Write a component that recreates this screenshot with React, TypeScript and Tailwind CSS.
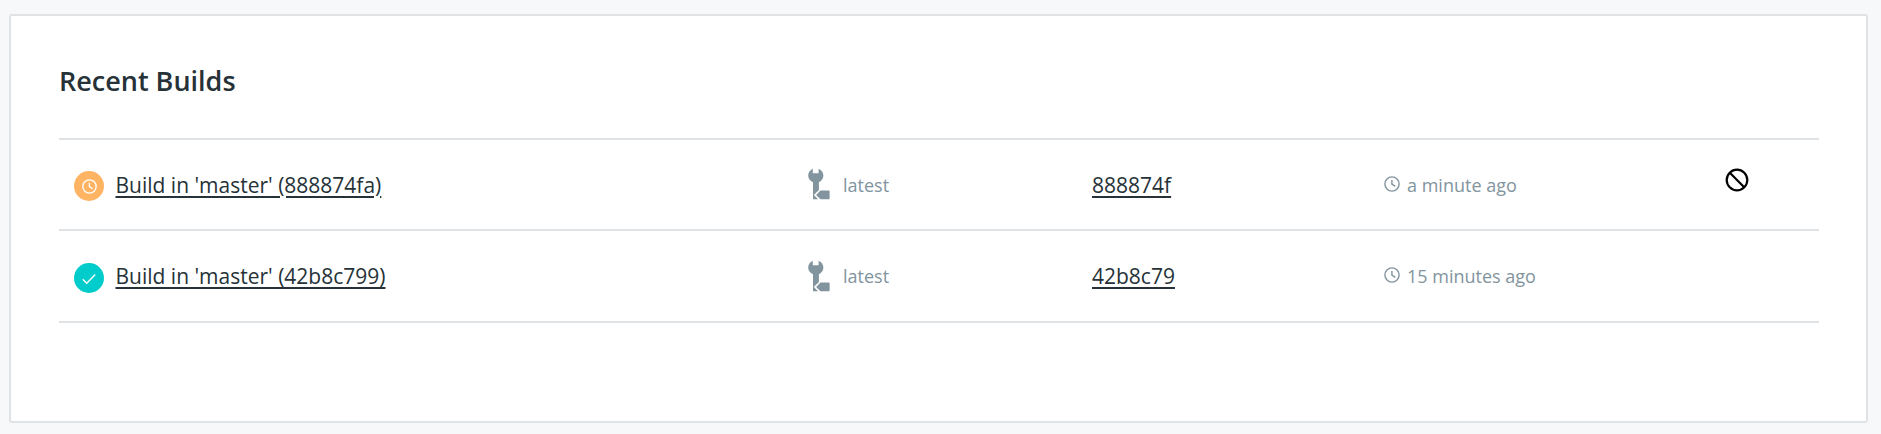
type Build = {
  status: "running" | "success";
  title: string;
  tag: string;
  commit: string;
  age: string;
};

const builds: Build[] = [
  { status: "running", title: "Build in 'master' (888874fa)", tag: "latest", commit: "888874f", age: "a minute ago" },
  { status: "success", title: "Build in 'master' (42b8c799)", tag: "latest", commit: "42b8c79", age: "15 minutes ago" },
];

function Clock({ className }: { className: string }) {
  return (
    <svg viewBox="0 0 16 16" fill="none" stroke="currentColor" strokeWidth="1.4" className={className}>
      <circle cx="8" cy="8" r="7.1" />
      <path d="M7.9 3.9V8.1L11.3 10.4" />
    </svg>
  );
}

function StatusBadge({ status }: { status: Build["status"] }) {
  if (status === "running") {
    return (
      <span className="mt-[2px] flex size-[30px] items-center justify-center rounded-full bg-[#ffb463] pt-[2px] text-white">
        <Clock className="size-[15px]" />
      </span>
    );
  }
  return (
    <span className="mt-[3px] flex size-[30px] items-center justify-center rounded-full bg-[#00cccc] pt-[2px] text-white">
      <svg viewBox="0 0 14 12" fill="none" stroke="currentColor" strokeWidth="1.4" className="h-3 w-3.5">
        <path d="M0.8 6.2L4.8 10.2L13.2 1.5" />
      </svg>
    </span>
  );
}

function BuildTag() {
  return (
    <svg viewBox="0 0 22 32" fill="#82949e" className="mb-px h-8 w-[22px]">
      <path d="M4.8 0.8V5.2H10.6V0.8C13.5 2 15.4 4.6 15.4 7.6C15.4 10.5 13.6 12.9 10.9 14.2V22.5L5 27V14.2C2 13 0.2 10.6 0.2 7.6C0.2 4.6 1.9 2 4.8 0.8Z" />
      <path d="M5 23V31.2H10.5L6.3 27L10.5 22.6Z" />
      <path d="M12.3 22.4H20.6Q21.6 22.4 21.6 23.4V30.4Q21.6 31.2 20.8 31.2H12.3L8 27Z" />
      <path d="M12 21.9L6.8 27L12 32.1" fill="none" stroke="white" strokeWidth="1.3" />
    </svg>
  );
}

const link =
  "font-normal text-[#263238] underline decoration-2 underline-offset-[3px] text-[21px] leading-[30px]";

export default function App() {
  return (
    <div className="h-[434px] bg-[#f7f8fa] pt-[14px] pr-[13px] pl-[9px] font-['Open_Sans',sans-serif]">
      <section className="h-[409px] rounded-[3px] border-2 border-[#e0e3e6] bg-white pt-[47px] pr-[47px] pl-12">
        <h2 className="h-[75px] text-[27px] leading-9 font-semibold text-[#263238]">Recent Builds</h2>
        <ul className="border-t-2 border-[#dfe3e6]">
          {builds.map((build) => (
            <li
              key={build.commit}
              className="flex h-[91px] items-center border-b-2 border-[#dfe3e6] pl-[15px] last:h-[92px]"
            >
              <div className="flex w-[734px] items-center gap-[11.5px]">
                <StatusBadge status={build.status} />
                <a href="#" className={link}>{build.title}</a>
              </div>
              <div className="flex w-[284px] items-center gap-[13px] text-[18px] text-[#82949e]">
                <BuildTag />
                <span className="pt-px">{build.tag}</span>
              </div>
              <div className="w-[292px]">
                <a href="#" className={link}>{build.commit}</a>
              </div>
              <div className="flex w-[341px] items-center gap-[7px] text-[18px] text-[#82949e]">
                <Clock className="mb-[2px] size-4" />
                <span className="pt-px">{build.age}</span>
              </div>
              {build.status === "running" && (
                <button type="button" aria-label="Cancel build" className="mb-[10px]">
                  <svg viewBox="0 0 24 24" fill="none" stroke="black" strokeWidth="2.2" className="size-6">
                    <circle cx="12" cy="12" r="10.3" />
                    <path d="M4.8 4.8L19.2 19.2" />
                  </svg>
                </button>
              )}
            </li>
          ))}
        </ul>
      </section>
    </div>
  );
}
